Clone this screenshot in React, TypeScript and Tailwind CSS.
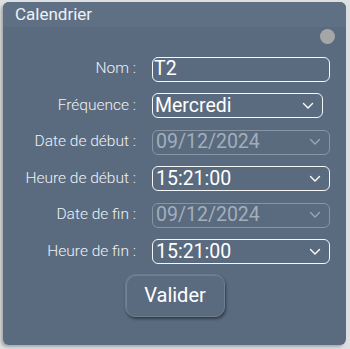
import React from "react";

const Chevron = ({ dim }: { dim?: boolean }) => (
  <svg width="12" height="8" viewBox="0 0 12 8" className="shrink-0">
    <path d="M1.5 1.5 L6 6 L10.5 1.5" fill="none" stroke={dim ? "#9aa6b3" : "#ffffff"} strokeWidth="1.4" strokeLinecap="round" strokeLinejoin="round" />
  </svg>
);

const Row = ({ label, children }: { label: string; children: React.ReactNode }) => (
  <div className="flex items-center h-[24px]">
    <div className="w-[136px] text-right pr-[3px] text-[15.5px] font-light text-[#eef2f6] leading-none">{label}</div>
    <div className="ml-[13px] w-[178px]">{children}</div>
  </div>
);

const Field = ({ value, dim, select, pl }: { value: string; dim?: boolean; select?: boolean; pl?: string }) => (
  <div
    className={`h-[25px] rounded-[6px] border-[1.5px] flex items-center ${pl ?? "pl-[3px]"} pr-[8px] ${
      dim ? "border-[#8795a5] text-[#a3aebb]" : "border-[#f4f6f8] text-white"
    }`}
  >
    <span className="flex-1 text-[19.5px] leading-none">{value}</span>
    {select && <Chevron dim={dim} />}
  </div>
);

export default function App() {
  return (
    <div className="w-[350px] h-[349px] bg-[#dedfe1] pt-[2px] pl-[3px]" style={{ fontFamily: "Roboto, sans-serif" }}>
      <div className="w-[343px] h-[343px] rounded-[6px] bg-[#5a6b80] overflow-hidden shadow-[-2px_2px_3px_rgba(0,0,0,0.25)] flex flex-col">
        <div className="h-[25px] bg-[#5f7085] flex items-center pl-[12px] text-[17px] text-[#eef2f5]">Calendrier</div>
        <div className="flex justify-end pr-[11px] pt-[2px]">
          <div className="w-[15px] h-[15px] rounded-full bg-[#a6a6a6]" />
        </div>
        <div className="flex flex-col gap-[12.5px] pt-[13px]">
          <Row label="Nom :"><Field value="T2" pl="pl-[1px]" /></Row>
          <Row label="Fréquence :"><div className="w-[171px]"><Field value="Mercredi" select pl="pl-[2px]" /></div></Row>
          <Row label="Date de début :"><Field value="09/12/2024" dim select /></Row>
          <Row label="Heure de début :"><Field value="15:21:00" select /></Row>
          <Row label="Date de fin :"><Field value="09/12/2024" dim select /></Row>
          <Row label="Heure de fin :"><Field value="15:21:00" select /></Row>
        </div>
        <div className="pl-[122px] pt-[10px]">
          <button className="w-[100px] h-[43px] rounded-[10px] bg-[#5a6b80] border border-[#6c7d91] text-white text-[20px] shadow-[1px_2px_3px_rgba(0,0,0,0.45),inset_1px_1px_1px_rgba(255,255,255,0.15)]">
            Valider
          </button>
        </div>
      </div>
    </div>
  );
}
